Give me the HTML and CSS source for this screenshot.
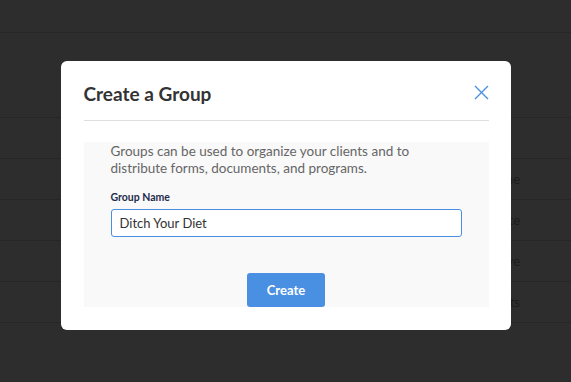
FILE: index.html
```html
<!DOCTYPE html>
<html lang="en">
<head>
  <meta charset="UTF-8">
  <meta name="viewport" content="width=device-width, initial-scale=1.0">
  <title>Create a Group</title>
  <link rel="stylesheet" href="styles.css">
</head>
<body>
  <!-- page behind the dimmed overlay -->
  <div class="page">
    <div class="top-bar"></div>
    <div class="toolbar"></div>
    <div class="row"><span class="cell"></span></div>
    <div class="row"><span class="cell">Online</span></div>
    <div class="row"><span class="cell">Private</span></div>
    <div class="row"><span class="cell">Active</span></div>
    <div class="row"><span class="cell">Documents</span></div>
  </div>

  <div class="overlay">
    <div class="modal">
      <div class="modal-header">
        <h2 class="modal-title">Create a Group</h2>
        <button class="close-btn" aria-label="Close">
          <svg width="15" height="15" viewBox="0 0 15 15">
            <path d="M1 1 L14 14 M14 1 L1 14" stroke="#4a90e2" stroke-width="1.4" fill="none"/>
          </svg>
        </button>
      </div>
      <div class="modal-body">
        <p class="intro">Groups can be used to organize your clients and to distribute forms, documents, and programs.</p>
        <label class="field-label" for="groupName">Group Name</label>
        <input class="text-input" id="groupName" type="text" value="Ditch Your Diet" autofocus>
        <div class="actions">
          <button class="btn">Create</button>
        </div>
      </div>
    </div>
  </div>
</body>
</html>
```

FILE: styles.css
```css
body {
  margin: 0;
  font-family: Lato, "Open Sans", sans-serif;
  background-color: #2d2d2d;
  height: 382px;
  overflow: hidden;
}
.page {
  width: 100%;
}
.top-bar {
  height: 32px;
  border-bottom: 1px solid #262626;
}
.toolbar {
  height: 84px;
  border-bottom: 1px solid #262626;
}
.row {
  height: 40px;
  border-bottom: 1px solid #262626;
  display: flex;
  align-items: center;
}
.cell {
  width: 520px;
  text-align: right;
  font-size: 13px;
  color: #1c1c1c;
}

/* modal */
.overlay {
  position: absolute;
  top: 0;
  left: 0;
  right: 0;
  bottom: 0;
  display: flex;
  justify-content: center;
  align-items: flex-start;
  padding-top: 61px;
}
.modal {
  width: 450px;
  box-sizing: border-box;
  background-color: white;
  border-radius: 6px;
  padding: 0 22px 23px 23px;
}
.modal-header {
  display: flex;
  justify-content: space-between;
  align-items: center;
  height: 59px;
  border-bottom: 1px solid #dedede;
}
.modal-title {
  margin: 0;
  padding-top: 5px;
  font-size: 19px;
  font-weight: 700;
  color: #333;
}
.close-btn {
  background: none;
  border: none;
  padding: 0;
  margin-top: 7px;
  cursor: pointer;
}
.modal-body {
  margin-top: 21px;
  background-color: #f9f9f9;
  padding: 1px 27px 0;
}
.intro {
  margin: 0;
  max-width: 320px;
  font-size: 13.5px;
  line-height: 17px;
  color: #666;
}
.field-label {
  display: block;
  margin-top: 14px;
  margin-bottom: 6px;
  font-size: 10.5px;
  font-weight: 700;
  color: #1f2d4d;
}
.text-input {
  display: block;
  width: 100%;
  height: 28px;
  box-sizing: border-box;
  border: 1px solid #4a90e2;
  border-radius: 3px;
  padding: 0 8px;
  font-family: Lato, "Open Sans", sans-serif;
  font-size: 13px;
  color: #333;
  outline: none;
}
.actions {
  display: flex;
  justify-content: center;
  margin-top: 36px;
}
.btn {
  width: 78px;
  height: 34px;
  background-color: #4a90e2;
  color: white;
  border: none;
  border-radius: 3px;
  font-family: Lato, "Open Sans", sans-serif;
  font-size: 13px;
  font-weight: 700;
  cursor: pointer;
}
```
